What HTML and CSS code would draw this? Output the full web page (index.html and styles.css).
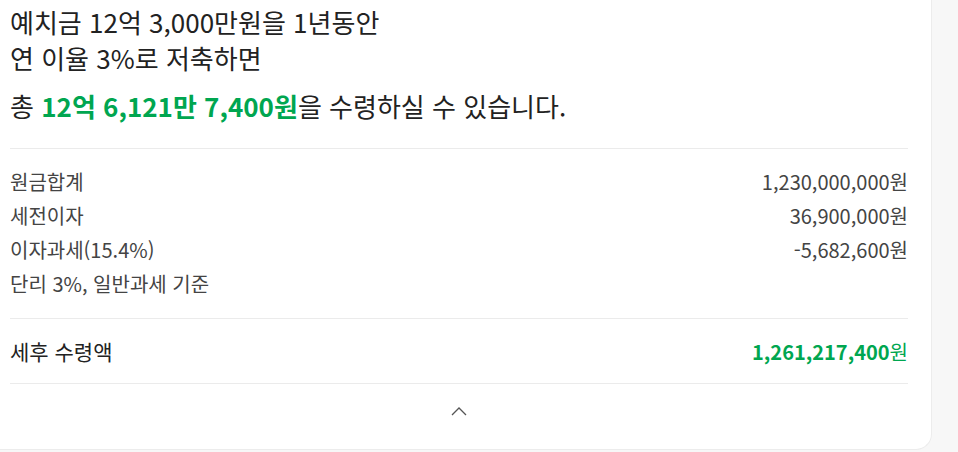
FILE: index.html
```html
<!DOCTYPE html>
<html lang="ko">
<head>
<meta charset="utf-8">
<link rel="stylesheet" href="styles.css">
</head>
<body>
<div class="card">
  <div class="summary">
    <p class="lead">예치금 12억 3,000만원을 1년동안<br>연 이율 3%로 저축하면</p>
    <p class="total">총 <strong>12억 6,121만 7,400원</strong>을 수령하실 수 있습니다.</p>
  </div>
  <div class="details">
    <div class="row"><span>원금합계</span><span>1,230,000,000원</span></div>
    <div class="row"><span>세전이자</span><span>36,900,000원</span></div>
    <div class="row"><span>이자과세(15.4%)</span><span>-5,682,600원</span></div>
    <div class="row"><span>단리 3%, 일반과세 기준</span></div>
  </div>
  <div class="net">
    <span>세후 수령액</span><span class="amount"><b>1,261,217,400</b>원</span>
  </div>
  <div class="toggle">
    <svg width="16" height="10" viewBox="0 0 16 10"><path d="M1 9 L8 2 L15 9" fill="none" stroke="#555" stroke-width="1.3"/></svg>
  </div>
</div>
</body>
</html>
```

FILE: styles.css
```css
html, body {
  margin: 0;
  padding: 0;
  background: #f7f7f7;
}
body {
  font-family: "Noto Sans CJK KR", "Noto Sans", sans-serif;
  color: #222;
}
.card {
  width: 932px;
  height: 450px;
  box-sizing: border-box;
  background: #fff;
  border-right: 1px solid #ececec;
  border-bottom: 1px solid #ececec;
  border-bottom-right-radius: 16px;
  padding: 0 23px 0 10px;
  display: flex;
  flex-direction: column;
}
.summary {
  border-bottom: 1px solid #ebebeb;
  padding-bottom: 24px;
}
.lead {
  margin: 0;
  font-size: 26px;
  line-height: 36px;
  padding-top: 4px;
}
.total {
  margin: 12px 0 0;
  font-size: 26px;
  line-height: 36px;
}
.total strong {
  color: #00a650;
  font-weight: 700;
}
.details {
  padding: 16px 0 17px;
  border-bottom: 1px solid #ebebeb;
  color: #444;
}
.row {
  display: flex;
  justify-content: space-between;
  font-size: 20px;
  line-height: 34px;
}
.net {
  display: flex;
  justify-content: space-between;
  align-items: center;
  height: 64px;
  border-bottom: 1px solid #ebebeb;
  font-size: 21px;
}
.amount {
  color: #00a650;
  font-size: 20px;
}
.amount b {
  font-weight: 700;
}
.toggle {
  display: flex;
  justify-content: center;
  padding-top: 22px;
}
```
